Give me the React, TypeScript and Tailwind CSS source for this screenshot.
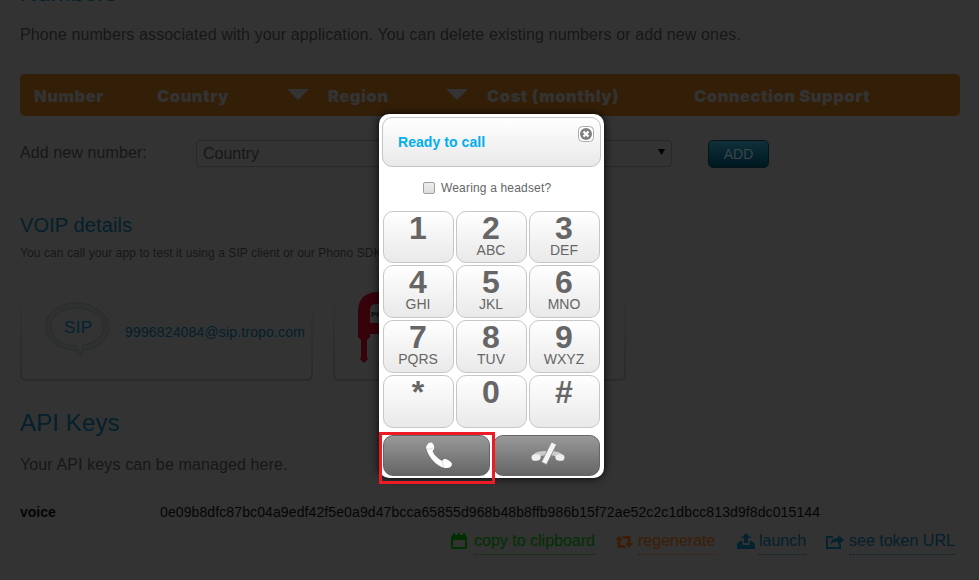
import React from "react";

const keys = [
  ["1", ""], ["2", "ABC"], ["3", "DEF"],
  ["4", "GHI"], ["5", "JKL"], ["6", "MNO"],
  ["7", "PQRS"], ["8", "TUV"], ["9", "WXYZ"],
  ["*", ""], ["0", ""], ["#", ""],
];

function SortArrow({ className }: { className: string }) {
  return (
    <svg className={className} width="22" height="11" viewBox="0 0 22 11">
      <path d="M0 0H22L11 11Z" fill="#333" />
    </svg>
  );
}

function NumbersTable() {
  return (
    <div className="mt-[27px] flex h-[42px] items-center whitespace-nowrap rounded-[5px] bg-[#331f08] pb-px pt-[3px] pl-[14px] font-['Inter'] text-[16.5px] font-black leading-[20px] tracking-[0.5px] text-[#333]">
      <span className="w-[123px]">Number</span>
      <span className="w-[130px]">Country</span>
      <SortArrow className="mt-[-3px] mr-[19px]" />
      <span className="w-[118px]">Region</span>
      <SortArrow className="mt-[-3px] mr-[19px]" />
      <span className="w-[207px]">Cost (monthly)</span>
      <span>Connection Support</span>
    </div>
  );
}

function Card({ children }: { children: React.ReactNode }) {
  return (
    <div className="h-[94px] w-[293px] rounded-[5px] bg-linear-to-b from-[#333] to-[#2b2b2b] p-[2px] pt-0">
      <div className="flex h-[92px] rounded-[4px] bg-[#333]">{children}</div>
    </div>
  );
}

function SipBubble() {
  return (
    <svg className="mt-[14px] ml-[22px] shrink-0" width="68" height="58" viewBox="0 0 68 58">
      <path
        d="M33 2C15 2 1.500 12 1.500 26S13 48 31 49L37.500 55L40 49C55 47 65 38 65 26S51 2 33 2Z"
        fill="#2f3131" stroke="#2a2d2d"
      />
      <path
        d="M33 7C18 7 7 15 7 26S18 44.500 32 44.500L37 53L39.500 44C51 42 60 35 60 26S48 7 33 7Z"
        fill="#333" stroke="#2a2d2d"
      />
      <text x="20" y="32" fontFamily="Liberation Sans" fontSize="17" fill="#04222f" textLength="28">SIP</text>
    </svg>
  );
}

function PhonoJack() {
  return (
    <svg className="mt-[3px] ml-[23px]" width="80" height="80" viewBox="0 0 80 80">
      <path d="M0 22C0 8 8 2 20 2H60V44H12V47L9 50H3L0 47Z" fill="#37030b" />
      <path d="M12 33V20Q12 14 18 14H60V33Z" fill="#333" />
      <path d="M3 49H9V67L10 69L6 73L2 69L3 67Z" fill="#37030b" />
      <text x="13" y="27" fontFamily="Liberation Sans" fontWeight="bold" fontSize="8" fill="#0c0c0c">PHONO</text>
    </svg>
  );
}

function Page() {
  return (
    <div className="flex h-full flex-col px-5 text-[16px] text-[#171717]">
      <div className="h-[23px]">
        <h1 className="mt-[-21px] h-[28px] text-[24px] leading-[28px] text-[#04202c]">Numbers</h1>
      </div>
      <p className="whitespace-nowrap leading-[24px] tracking-[0.115px]">
        Phone numbers associated with your application. You can delete existing numbers or add new ones.
      </p>
      <div className="w-[940px]"><NumbersTable /></div>
      <div className="mt-[24px] flex h-[28px]">
        <span className="w-[176px] leading-[25px] tracking-[0.1px]">Add new number:</span>
        <div className="flex h-[27px] w-[476px] items-center justify-between rounded-[4px] border border-[#282828] pr-[6px] pl-[6px]">
          <span>Country</span>
          <svg className="mt-[-3px]" width="7" height="6" viewBox="0 0 7 6"><path d="M0 0H7L3.500 6Z" fill="#000" /></svg>
        </div>
        <button className="ml-[36px] h-[28px] w-[61px] rounded-[5px] border border-[#061419] bg-linear-to-b from-[#10303b] to-[#001820] text-[14px] leading-[26px] text-[#3b474b]">ADD</button>
      </div>
      <h2 className="mt-[45px] text-[20px] leading-[24px] tracking-[0.12px] text-[#04202c]">VOIP details</h2>
      <p className="mt-[7px] text-[12px] leading-[18px] tracking-[0.08px]">You can call your app to test it using a SIP client or our Phono SDK</p>
      <div className="mt-[25px] flex gap-[20px]">
        <Card>
          <SipBubble />
          <span className="mt-[35px] ml-[13px] text-[14px] leading-[20px] tracking-[0.16px] text-[#04202c]">9996824084@sip.tropo.com</span>
        </Card>
        <Card><PhonoJack /></Card>
      </div>
      <h1 className="mt-[28px] text-[24px] leading-[28px] tracking-[0.12px] text-[#04202c]">API Keys</h1>
      <p className="mt-[16px] leading-[24px] tracking-[0.12px]">Your API keys can be managed here.</p>
      <div className="mt-[25px] flex text-[14px] leading-[20px] text-[#050505]">
        <b className="w-[140px]">voice</b>
        <span className="tracking-[0.108px]">0e09b8dfc87bc04a9edf42f5e0a9d47bcca65855d968b48b8ffb986b15f72ae52c2c1dbcc813d9f8dc015144</span>
      </div>
      <div className="mt-[7px] ml-[431px] flex whitespace-nowrap leading-[23px]">
        <svg className="mt-[4px] mr-[7px] h-[16px] w-[16px]" viewBox="0 0 16 16" fill="#003000">
          <path fillRule="evenodd" d="M0 4Q0 2 2 2V0H4V2H7V0H9V2H12V0H14V2Q16 2 16 4V14Q16 16 14 16H2Q0 16 0 14ZM2 7V14H14V7Z" />
        </svg>
        <a className="h-[26px] w-[121px] border-b border-dotted border-[#003000] text-[#003000]">copy to clipboard</a>
        <svg className="mt-[6px] ml-[20px] mr-[5px]" width="18" height="14" viewBox="0 0 18 14" fill="#3d1d05">
          <path d="M4 1L8 5H5.500V10H9L11 13H2.500V5H0Z" />
          <path d="M7 1H15.500V8H18L14 13L10 8H12.500V4H9Z" />
        </svg>
        <a className="h-[26px] w-[78px] border-b border-dotted border-[#3d1d05] text-[#3d1d05]">regenerate</a>
        <svg className="mt-[4px] ml-[21px] mr-[4px]" width="18" height="16" viewBox="0 0 18 16" fill="#04222f">
          <path d="M9 0L14 5H11V10H7V5H4Z" />
          <path d="M3 8H5.500V12H12.500V8H15L18 11V16H0V11Z" />
        </svg>
        <a className="h-[26px] w-[47px] border-b border-dotted border-[#04202c] text-[#04202c]">launch</a>
        <svg className="mt-[6px] ml-[20px] mr-[5px]" width="18" height="14" viewBox="0 0 18 14" fill="#04222f">
          <path d="M0 1H7V3H2V12H13V10L15 8V14H0ZM12 0L18 5L12 10V7Q7 6 4 10Q5 3 12 3Z" />
        </svg>
        <a className="h-[26px] w-[106px] border-b border-dotted border-[#04202c] text-[#04202c]">see token URL</a>
      </div>
    </div>
  );
}

function Dialer() {
  return (
    <div className="absolute left-[379px] top-[114px] h-[364px] w-[225px] rounded-[10px] bg-white pt-[3px] text-[#666] shadow-[0_0_8px_rgba(0,0,0,0.9)]">
      <div className="mx-[3px] flex h-[50px] justify-between rounded-[10px] border border-[#c4c4c4] bg-linear-to-b from-white to-[#e9e9e9] pl-[15px] pr-[6px]">
        <span className="text-[14px] font-bold leading-[48px] tracking-[0.06px] text-[#00aeef]">Ready to call</span>
        <svg className="mt-[8px]" width="16" height="16" viewBox="0 0 16 16">
          <rect x=".5" y=".5" width="15" height="15" rx="4" fill="#fff" stroke="#aaa" />
          <circle cx="8" cy="8" r="6" fill="#808080" />
          <path d="M5.500 5.500L10.500 10.500M10.500 5.500L5.500 10.500" stroke="#fff" strokeWidth="2.300" />
        </svg>
      </div>
      <div className="mt-[14px] ml-[44px] flex h-[14px] items-center gap-[6px] whitespace-nowrap text-[12px]">
        <span className="h-[12px] w-[12px] rounded-[2px] border border-[#a0a0a0] bg-linear-to-b from-[#eee] to-[#ddd]" />
        <span className="leading-[14px] tracking-[0.17px]">Wearing a headset?</span>
      </div>
      <div className="mt-[16px] ml-[4px] grid h-[217px] w-[217px] grid-cols-3 grid-rows-[52px_53px_53px_53px] content-between gap-x-[2px]">
        {keys.map(([n, letters]) => (
          <button key={n} className="flex flex-col items-center rounded-[10px] border border-[#c6c6c6] bg-linear-to-b from-white to-[#e9e9e9] pt-px pr-px">
            <span className="text-[32px] font-bold leading-[30px]">{n}</span>
            <span className="text-[14px] leading-[14px]">{letters}</span>
          </button>
        ))}
      </div>
      <div className="mt-[7px] ml-[4px] flex gap-[3px]">
        <div className="flex h-[41px] w-[107px] items-center justify-center rounded-[10px] border border-[#666] bg-linear-to-b from-[#999] to-[#656565]">
          <svg className="mt-[-2px] ml-[2px]" width="28" height="28" viewBox="0 0 28 28">
            <path d="M4.500 2L7.500 1.500Q11 4 10 8L8.500 10Q10 15 18 20L20 18Q24 17.500 28 22.500Q28 27.500 21 27Q14 25.500 8 18.500Q3 12 2 6Z" fill="#fff" />
            <path d="M3 8Q6 9 9 7M19 19.500Q18 23 19.500 26" fill="none" stroke="#ccc" strokeWidth=".7" />
          </svg>
        </div>
        <div className="flex h-[41px] w-[107px] items-center justify-center rounded-[10px] border border-[#666] bg-linear-to-b from-[#999] to-[#656565]">
          <svg className="mt-[-4px] ml-[2px]" width="34" height="24" viewBox="0 0 34 24">
            <path d="M1 15Q3 8.500 15 9V13L10 14L9 17Q4 20 1 18Z" fill="#ccc" />
            <path d="M33 15Q30 8.500 19 9V13L24 14L25 17Q30 20 33 18Z" fill="#ccc" />
            <ellipse cx="5" cy="15.500" rx="4.500" ry="3.300" fill="#eee" />
            <ellipse cx="29" cy="15.500" rx="4.500" ry="3.300" fill="#eee" />
            <path d="M20.500 0L25.500 2.500L15.500 22.500L10.500 20Z" fill="#f4f4f4" stroke="#888" strokeWidth=".8" />
          </svg>
        </div>
      </div>
    </div>
  );
}

export default function App() {
  return (
    <div className="relative h-[580px] w-[979px] overflow-hidden bg-[#333] font-['Liberation_Sans',sans-serif]">
      <Page />
      <Dialer />
      <div className="absolute left-[379px] top-[432px] h-[52px] w-[116px] border-3 border-[#ed1c24]" />
    </div>
  );
}
